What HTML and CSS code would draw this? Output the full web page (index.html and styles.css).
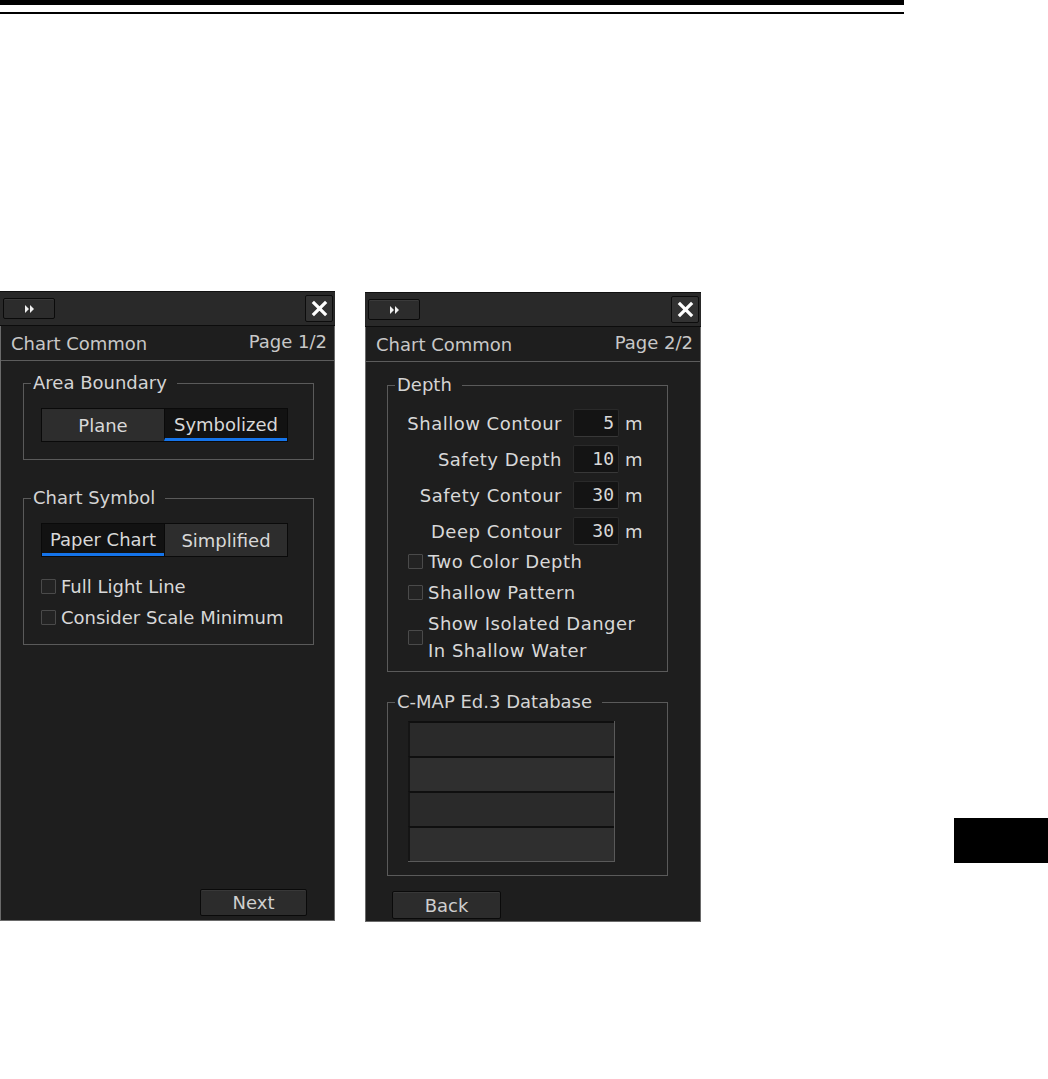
FILE: index.html
```html
<!DOCTYPE html>
<html lang="en">

<head>
    <meta charset="UTF-8" />
    <title>Chart Common</title>
    <link rel="stylesheet" href="styles.css">
</head>

<body>
    <div class="rule-thick"></div>
    <div class="rule-thin"></div>

    <div class="layout">
        <!-- Page 1 -->
        <div class="panel">
            <div class="titlebar">
                <button class="btn-expand">
                    <svg width="9" height="8" viewBox="0 0 9 8"><polygon points="0,0 4,4 0,8" /><polygon points="5,0 9,4 5,8" /></svg>
                </button>
                <button class="btn-close">
                    <svg width="19" height="19" viewBox="0 0 20 20"><path d="M3 3 L17 17 M17 3 L3 17" /></svg>
                </button>
            </div>
            <div class="panel-main">
                <div class="header">
                    <span>Chart Common</span>
                    <span class="page-no">Page 1/2</span>
                </div>
                <div class="content">
                    <fieldset>
                        <legend>Area Boundary</legend>
                        <div class="fs-body fs-area">
                            <div class="seg">
                                <div class="seg-btn">Plane</div>
                                <div class="seg-btn on">Symbolized</div>
                            </div>
                        </div>
                    </fieldset>

                    <fieldset class="fs-gap">
                        <legend>Chart Symbol</legend>
                        <div class="fs-body fs-symbol">
                            <div class="seg">
                                <div class="seg-btn on">Paper Chart</div>
                                <div class="seg-btn">Simplified</div>
                            </div>
                            <div class="checks">
                                <div class="check"><span class="box"></span>Full Light Line</div>
                                <div class="check"><span class="box"></span>Consider Scale Minimum</div>
                            </div>
                        </div>
                    </fieldset>
                </div>
                <div class="footer footer-right">
                    <button class="btn-plain btn-next">Next</button>
                </div>
            </div>
        </div>

        <!-- Page 2 -->
        <div class="panel panel-second">
            <div class="titlebar">
                <button class="btn-expand">
                    <svg width="9" height="8" viewBox="0 0 9 8"><polygon points="0,0 4,4 0,8" /><polygon points="5,0 9,4 5,8" /></svg>
                </button>
                <button class="btn-close">
                    <svg width="19" height="19" viewBox="0 0 20 20"><path d="M3 3 L17 17 M17 3 L3 17" /></svg>
                </button>
            </div>
            <div class="panel-main">
                <div class="header">
                    <span>Chart Common</span>
                    <span class="page-no">Page 2/2</span>
                </div>
                <div class="content content-second">
                    <fieldset>
                        <legend>Depth</legend>
                        <div class="fs-body fs-depth">
                            <div class="depth-row">
                                <span class="label">Shallow Contour</span>
                                <span class="num">5</span>
                                <span class="unit">m</span>
                            </div>
                            <div class="depth-row">
                                <span class="label">Safety Depth</span>
                                <span class="num">10</span>
                                <span class="unit">m</span>
                            </div>
                            <div class="depth-row">
                                <span class="label">Safety Contour</span>
                                <span class="num">30</span>
                                <span class="unit">m</span>
                            </div>
                            <div class="depth-row">
                                <span class="label">Deep Contour</span>
                                <span class="num">30</span>
                                <span class="unit">m</span>
                            </div>
                            <div class="checks checks-depth">
                                <div class="check"><span class="box"></span>Two Color Depth</div>
                                <div class="check"><span class="box"></span>Shallow Pattern</div>
                                <div class="check"><span class="box"></span><span>Show Isolated Danger<br>In Shallow Water</span></div>
                            </div>
                        </div>
                    </fieldset>

                    <fieldset class="fs-gap-db">
                        <legend>C-MAP Ed.3 Database</legend>
                        <div class="fs-body fs-db">
                            <div class="db-list">
                                <div class="db-row"></div>
                                <div class="db-row"></div>
                                <div class="db-row"></div>
                                <div class="db-row"></div>
                            </div>
                        </div>
                    </fieldset>
                </div>
                <div class="footer footer-left">
                    <button class="btn-plain btn-back">Back</button>
                </div>
            </div>
        </div>

        <div class="side-tab"></div>
    </div>
</body>

</html>
```

FILE: styles.css
```css
* {
    box-sizing: border-box;
}

body {
    margin: 0;
    background-color: #ffffff;
    font-family: "DejaVu Sans", sans-serif;
}

/* page rules at the top */
.rule-thick {
    width: 904px;
    height: 5px;
    background-color: #000;
}

.rule-thin {
    width: 904px;
    height: 2px;
    margin-top: 7px;
    background-color: #000;
}

.layout {
    display: flex;
    align-items: flex-start;
    margin-top: 277px;
}

/* panels */
.panel {
    display: flex;
    flex-direction: column;
    width: 335px;
    height: 630px;
    background-color: #1e1e1e;
    color: #d8d8d8;
    font-size: 18px;
}

.panel-second {
    width: 336px;
    margin-left: 30px;
    margin-top: 1px;
}

.titlebar {
    display: flex;
    align-items: center;
    justify-content: space-between;
    height: 35px;
    padding: 0 2px 0 3px;
    background-color: #292929;
    border-top: 1px solid #111;
    border-bottom: 1px solid #0c0c0c;
}

.btn-expand {
    display: flex;
    align-items: center;
    justify-content: center;
    width: 52px;
    height: 21px;
    padding: 0;
    background-color: #2c2c2c;
    border: 1px solid #0a0a0a;
    border-radius: 2px;
    box-shadow: inset 0 1px 0 #3a3a3a;
}

.btn-expand svg {
    fill: #f0f0f0;
}

.btn-close {
    display: flex;
    align-items: center;
    justify-content: center;
    width: 28px;
    height: 27px;
    padding: 0;
    background-color: #323232;
    border: 1px solid #0c0c0c;
    border-radius: 2px;
}

.btn-close svg {
    stroke: #ffffff;
    stroke-width: 3.4;
    fill: none;
}

.panel-main {
    flex: 1;
    display: flex;
    flex-direction: column;
    border: 1px solid #6a6a6a;
    border-top: none;
}

.header {
    display: flex;
    align-items: center;
    justify-content: space-between;
    height: 35px;
    padding: 0 7px 0 10px;
    border-bottom: 1px solid #5c5c5c;
    color: #c8c8c8;
}

.page-no {
    padding-bottom: 4px;
}

.content {
    padding: 11px 20px 0 22px;
}

.content-second {
    padding: 12px 32px 0 21px;
}

/* fieldsets */
fieldset {
    margin: 0;
    padding: 0;
    border: 1px solid #5a5a5a;
    min-width: 0;
}

legend {
    margin-left: 7px;
    padding: 0 10px 0 2px;
    line-height: 22px;
    color: #d4d4d4;
}

.fs-gap {
    margin-top: 27px;
}

.fs-gap-db {
    margin-top: 19px;
}

.fs-area {
    padding: 14px 0 17px 17px;
}

.fs-symbol {
    padding: 14px 0 13px 17px;
}

.fs-depth {
    padding: 13px 0 7px 0;
}

.fs-db {
    padding: 8px 0 13px 20px;
}

/* segmented buttons */
.seg {
    display: flex;
    width: 247px;
    height: 34px;
    border: 1px solid #0a0a0a;
}

.seg-btn {
    flex: 1;
    display: flex;
    align-items: center;
    justify-content: center;
    background-color: #2d2d2d;
    color: #d8d8d8;
}

.seg-btn + .seg-btn {
    border-left: 1px solid #0a0a0a;
}

.seg-btn.on {
    background-color: #121212;
    border-bottom: 3px solid #1574ea;
    padding-top: 2px;
}

/* checkboxes */
.checks {
    display: flex;
    flex-direction: column;
    gap: 4px;
    margin-top: 16px;
}

.checks-depth {
    margin-top: 3px;
    padding-left: 20px;
    letter-spacing: 0.5px;
}

.check {
    display: flex;
    align-items: center;
    line-height: 27px;
}

.box {
    flex: none;
    width: 15px;
    height: 15px;
    margin-right: 5px;
    background-color: #232323;
    border: 1px solid #4a4a4a;
    border-radius: 1px;
}

/* depth inputs */
.depth-row {
    display: flex;
    align-items: center;
    height: 28px;
    margin-bottom: 8px;
}

.depth-row:nth-child(4) {
    margin-bottom: 0;
}

.label {
    width: 174px;
    margin-right: 11px;
    text-align: right;
    letter-spacing: 0.5px;
}

.num {
    width: 46px;
    height: 28px;
    padding-right: 4px;
    background-color: #141414;
    border: 1px solid #2a2a2a;
    border-bottom-color: #383838;
    border-radius: 2px;
    font-family: "DejaVu Sans Mono", monospace;
    line-height: 26px;
    text-align: right;
}

.unit {
    margin-left: 6px;
}

/* database list */
.db-list {
    width: 207px;
    border-right: 1px solid #5a5a5a;
    border-bottom: 1px solid #5a5a5a;
}

.db-row {
    height: 35px;
    background-color: #2a2a2a;
    border-top: 2px solid #0f0f0f;
    border-left: 2px solid #151515;
}

.db-row:nth-child(even) {
    background-color: #2f2f2f;
}

/* footer buttons */
.footer {
    display: flex;
    margin-top: auto;
}

.footer-right {
    justify-content: flex-end;
    padding: 0 27px 4px 0;
}

.footer-left {
    padding: 0 0 2px 26px;
}

.btn-plain {
    height: 27px;
    padding: 0;
    background-color: #2c2c2c;
    border: 1px solid #0a0a0a;
    border-radius: 2px;
    box-shadow: inset 0 1px 0 #383838;
    color: #cfcfcf;
    font-family: "DejaVu Sans", sans-serif;
    font-size: 18px;
}

.btn-next {
    width: 107px;
}

.btn-back {
    width: 109px;
    height: 28px;
}

/* black tab at the page edge */
.side-tab {
    width: 94px;
    height: 45px;
    margin-left: auto;
    margin-top: 527px;
    background-color: #000;
}
```
